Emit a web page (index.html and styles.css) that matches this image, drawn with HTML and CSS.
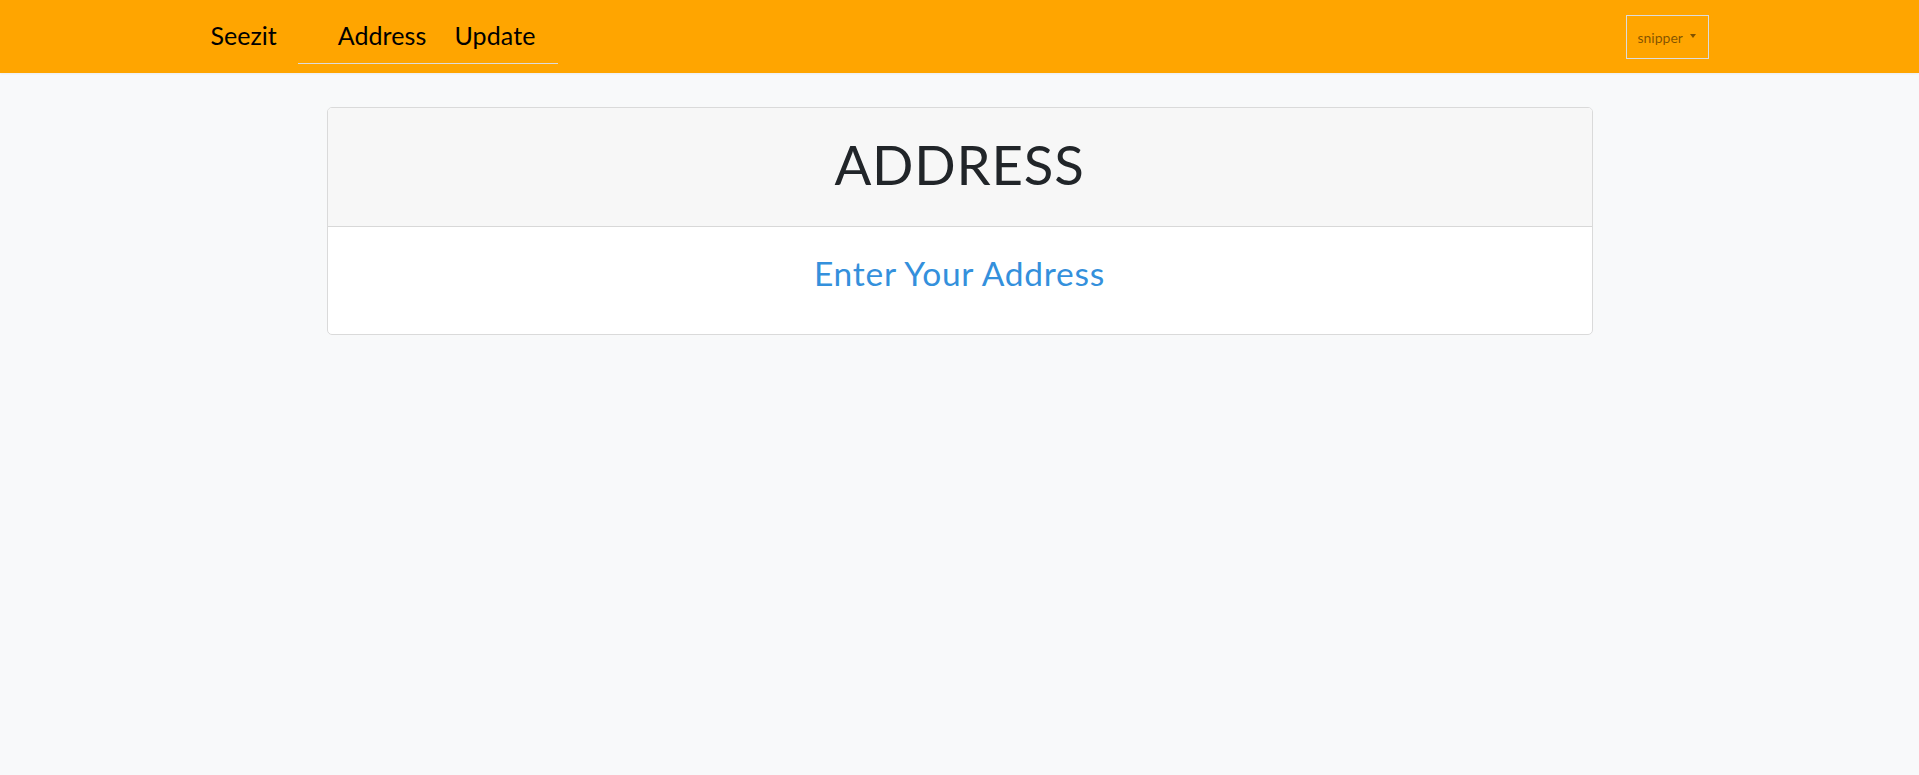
FILE: index.html
```html
<!DOCTYPE html>
<html lang="en">
<head>
<meta charset="utf-8">
<title>Seezit - Address</title>
<link rel="stylesheet" href="styles.css">
</head>
<body>
<nav class="navbar">
  <div class="nav-inner">
    <a class="brand" href="#">Seezit</a>
    <ul class="menu">
      <li><a class="menu-link" href="#">Address</a></li>
      <li><a class="menu-link" href="#">Update</a></li>
    </ul>
    <button class="user-btn" type="button">snipper <span class="caret"></span></button>
  </div>
</nav>
<main class="main">
  <section class="card">
    <header class="card-header">
      <h1 class="card-title">ADDRESS</h1>
    </header>
    <div class="card-body">
      <h2 class="card-subtitle">Enter Your Address</h2>
    </div>
  </section>
</main>
</body>
</html>
```
FILE: styles.css
```css
* { box-sizing: border-box; }

body {
  margin: 0;
  background: #f8f9fa;
  font-family: Lato, "Noto Sans", sans-serif;
  color: #212529;
}

.navbar {
  background: #ffa500;
  height: 73px;
  box-shadow: 0 1px 2px rgba(0,0,0,0.05);
}

.nav-inner {
  width: 1498px;
  margin: 0 auto;
  height: 73px;
  display: flex;
  align-items: flex-start;
}

.brand {
  margin-top: 17px;
  font-size: 25px;
  line-height: 37.5px;
  color: #000;
  text-decoration: none;
  margin-right: 21px;
}

.menu {
  list-style: none;
  margin: 17px 0 0 0;
  padding: 0 9px 8px 26px;
  display: flex;
  border-bottom: 1px solid #dcdcdc;
}

.menu-link {
  display: block;
  padding: 0 14px;
  font-size: 25px;
  line-height: 37.5px;
  color: #000;
  text-decoration: none;
  letter-spacing: 0.1px;
}

.user-btn {
  margin-left: auto;
  margin-top: 15px;
  height: 44px;
  width: 83px;
  padding: 0 0 0 11px;
  background: transparent;
  border: 1px solid #dcdcdc;
  font-family: Lato, "Noto Sans", sans-serif;
  font-size: 14px;
  color: rgba(0,0,0,0.5);
  display: flex;
  align-items: center;
  gap: 7px;
}

.caret {
  width: 0;
  height: 0;
  border-left: 3.5px solid transparent;
  border-right: 3.5px solid transparent;
  border-top: 4px solid rgba(0,0,0,0.5);
  margin-top: -3px;
}

.main {
  padding-top: 34px;
}

.card {
  width: 1266px;
  margin: 0 auto;
  background: #fff;
  border: 1px solid #dadada;
  border-radius: 5px;
  overflow: hidden;
}

.card-header {
  background: #f7f7f7;
  border-bottom: 1px solid #d8d8d8;
  padding: 24px 0 29px;
  text-align: center;
}

.card-title {
  margin: 0;
  font-size: 54.5px;
  font-weight: 400;
  line-height: 1.2;
  color: #212529;
  letter-spacing: 0.8px;
}

.card-body {
  padding: 26px 0 40px;
  text-align: center;
}

.card-subtitle {
  margin: 0;
  font-size: 33.5px;
  font-weight: 400;
  line-height: 1.2;
  color: #3490dc;
  letter-spacing: 0.75px;
}
```
